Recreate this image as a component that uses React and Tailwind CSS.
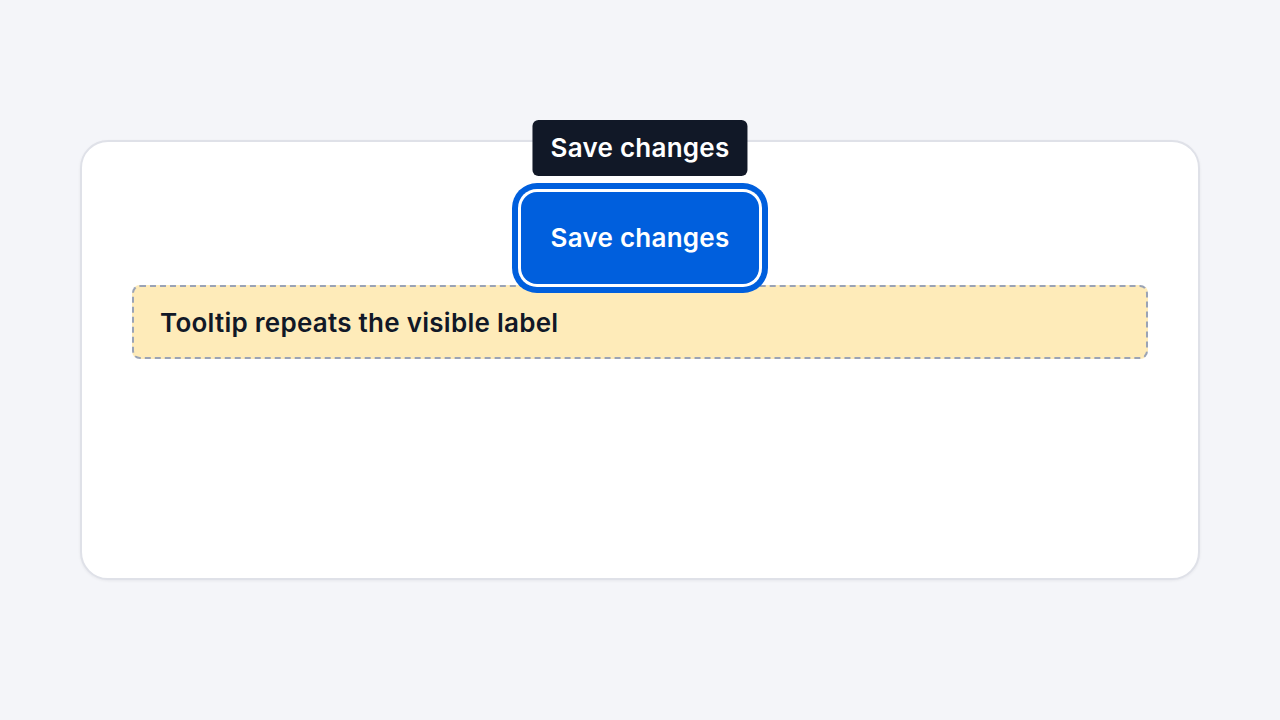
export default function App() {
  return (
    <div
      className="min-h-screen w-full bg-[#f4f5f9] px-[80px] pt-[140px]"
      style={{ fontFamily: "Inter, 'Noto Sans', sans-serif" }}
    >
      <div className="flex h-[440px] w-full flex-col items-center rounded-[28px] border-2 border-[#dfe1e8] bg-white px-[50px] pt-[50px] shadow-[0_1px_3px_rgba(15,23,42,0.06)]">
        <div className="relative z-10">
          <div className="absolute bottom-full left-1/2 mb-[16px] -translate-x-1/2 whitespace-nowrap rounded-[6px] bg-[#111827] px-[18px] py-[10px] text-[26px] font-semibold leading-[36px] tracking-[0.01em] text-white">
            Save changes
          </div>
          <button className="whitespace-nowrap rounded-[16px] bg-[#005fdd] px-[29px] py-[28px] text-[26px] font-semibold leading-[36px] tracking-[0.01em] text-white shadow-[0_0_0_3px_#ffffff,0_0_0_9px_#005fdd]">
            Save changes
          </button>
        </div>
        <div className="mt-[1px] flex h-[74px] w-full items-center rounded-[8px] border-2 border-dashed border-[#9aa3b5] bg-[#feebb9] px-[26px] text-[26px] font-semibold tracking-[0.01em] text-[#111827]">
          Tooltip repeats the visible label
        </div>
      </div>
    </div>
  );
}
